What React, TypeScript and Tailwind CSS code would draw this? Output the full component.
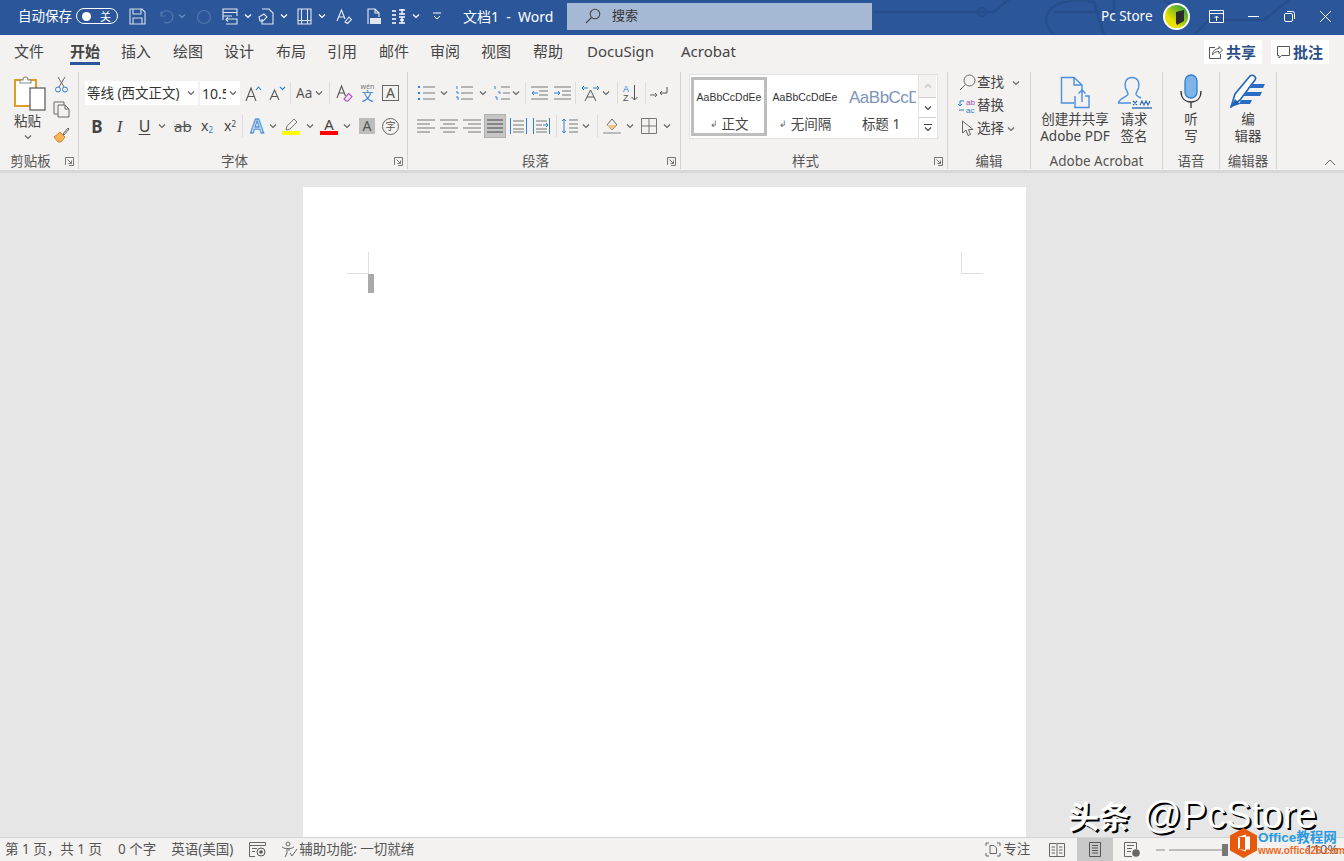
import React from 'react';

const G = '#6b6b6b';
const B = '#2f7fd1';

type P = { className?: string };

// small chevron used all over the ribbon
const Chev = ({ className = '', color = '#666' }: P & { color?: string }) => (
  <svg width="8" height="6" viewBox="0 0 8 6" className={`shrink-0 ${className}`} fill="none" stroke={color} strokeWidth="1.2">
    <path d="M1 1.5l3 3 3-3" />
  </svg>
);

const Sep = ({ className = '' }: P) => <div className={`w-px h-[22px] bg-[#dcdcdc] shrink-0 ${className}`} />;

const Ico = ({ w, h, className = '', children }: P & { w: number; h: number; children: React.ReactNode }) => (
  <svg width={w} height={h} viewBox={`0 0 ${w} ${h}`} fill="none" className={`shrink-0 ${className}`}>
    {children}
  </svg>
);

const Launcher = () => (
  <svg width="9" height="9" viewBox="0 0 9 9" fill="none" stroke="#777" strokeWidth="1" className="shrink-0 mr-[4px]">
    <path d="M.5 8V.5H8.5V8.5H4" />
    <path d="M2.5 2.5L6.5 6.5M6.5 3.5V6.5H3.5" />
  </svg>
);

const Group = ({ w, label, launcher, children }: { w: string; label: string; launcher?: boolean; children: React.ReactNode }) => (
  <div className={`${w} h-full shrink-0 flex flex-col border-r border-[#d2d2d2]`}>
    <div className="flex-1 min-h-0">{children}</div>
    <div className="h-[16px] flex items-center text-[13.5px] text-[#555] whitespace-nowrap">
      <span className={launcher ? 'flex-1 text-center pr-[4px]' : 'flex-1 text-center'}>{label}</span>
      {launcher && <Launcher />}
    </div>
  </div>
);

/* ---- title bar icons ---- */
const W = '#ffffff';
const SaveIcon = ({ className }: P) => (
  <Ico w={17} h={17} className={className}>
    <path d="M1 1H13L16 4V16H1Z M4 1V6H12V1 M4 16V10H13V16" stroke={W} strokeOpacity=".8" strokeWidth="1.1" />
  </Ico>
);
const UndoIcon = ({ className }: P) => (
  <Ico w={17} h={17} className={className}>
    <path d="M3 8a6 6 0 1 1 3 6M3 3v5h5" stroke="#6f8fc0" strokeOpacity=".55" strokeWidth="1.2" />
  </Ico>
);
const RedoIcon = ({ className }: P) => (
  <Ico w={16} h={17} className={className}>
    <circle cx="8" cy="9" r="6.5" stroke="#6f8fc0" strokeOpacity=".55" strokeWidth="1.2" />
  </Ico>
);
const QatForm = ({ className }: P) => (
  <Ico w={17} h={17} className={className}>
    <path d="M2 12V1H16V8M2 4.500H16M2 8H11" stroke={W} strokeOpacity=".85" strokeWidth="1.1" />
    <path d="M5 11H16V16H5M7 9.500L5 11.500L7 13.500" stroke={W} strokeOpacity=".85" strokeWidth="1.1" />
  </Ico>
);
const QatDoc = ({ className }: P) => (
  <Ico w={16} h={17} className={className}>
    <path d="M4 1H11L15 5V16H4V11" stroke={W} strokeOpacity=".85" strokeWidth="1.1" />
    <path d="M1 9L6 6L9 9L5 13H2Z" stroke={W} strokeOpacity=".85" strokeWidth="1.1" />
  </Ico>
);
const QatTable = ({ className }: P) => (
  <Ico w={15} h={17} className={className}>
    <path d="M1 1H14V16H1ZM4.500 1V16M10.500 1V16M1 12.500H14" stroke={W} strokeOpacity=".85" strokeWidth="1.1" />
  </Ico>
);
const QatFormat = ({ className }: P) => (
  <Ico w={16} h={17} className={className}>
    <path d="M1 13L5.500 2L9 11M3 9H8" stroke={W} strokeOpacity=".9" strokeWidth="1.1" />
    <path d="M9 14L13 9L15.500 11.500L11.500 15.500Z" stroke={W} strokeOpacity=".9" strokeWidth="1.1" />
  </Ico>
);
const QatPdf = ({ className }: P) => (
  <Ico w={15} h={17} className={className}>
    <path d="M2 16V1H9L13 5V9M9 1V5H13" stroke={W} strokeOpacity=".9" strokeWidth="1.1" />
    <rect x="4" y="10" width="11" height="6" fill={W} fillOpacity=".85" />
  </Ico>
);
const QatSpacing = ({ className }: P) => (
  <Ico w={15} h={17} className={className}>
    <path d="M1 3H5M1 7H5M1 11H5M1 15H5" stroke={W} strokeWidth="1.4" />
    <path d="M8 2H14M11 1V6M8 6H14M8 9H14M9 12H13M8 15H14M11 9V15" stroke={W} strokeWidth="1.4" />
  </Ico>
);

/* ---- font group ---- */
const GrowA = ({ className, down }: P & { down?: boolean }) => (
  <Ico w={17} h={17} className={className}>
    <path d={down ? 'M1 15L5.500 5L10 15M3 11.500H8' : 'M1 16L6 3L11 16M3 11.500H9'} stroke="#555" strokeWidth="1.1" />
    <path d={down ? 'M11 2L13.500 4.500L16 2' : 'M11 5L13.500 2L16 5'} stroke={B} strokeWidth="1.1" />
  </Ico>
);
const ClearFmt = ({ className }: P) => (
  <Ico w={17} h={18} className={className}>
    <path d="M1 14L5.500 2L9.500 12M3 9H8" stroke="#555" strokeWidth="1.1" />
    <path d="M8 15L12.500 9.500L16 12.500L12 17H10Z" fill="#f3e3f5" stroke="#a24bb5" strokeWidth="1.1" />
  </Ico>
);
const Mono = ({ t, className = '', w = 'w-[12px]' }: P & { t: string; w?: string }) => (
  <span className={`${w} shrink-0 text-center text-[#444] leading-none ${className}`}>{t}</span>
);

/* ---- paragraph group ---- */
const lines = (x1: number, x2: number, ys: number[]) => ys.map((y) => `M${x1} ${y}H${x2}`).join('');
const ListIcon = ({ className, kind }: P & { kind: 'dot' | 'num' | 'multi' }) => (
  <Ico w={18} h={16} className={className}>
    {kind === 'dot' && (
      <path d="M1 2h2M1 8h2M1 14h2" stroke={B} strokeWidth="2" />
    )}
    {kind === 'num' && <path d="M2 1v3M1 7h2v2M1 12h2v3" stroke={B} strokeWidth="1" />}
    {kind === 'multi' && <path d="M2 1v3M5 7h2v2M2 12h2v3" stroke={B} strokeWidth="1" />}
    <path d={kind === 'multi' ? 'M8 2H17M10 8H17M8 14H17' : lines(6, 18, [2, 8, 14])} stroke="#777" strokeWidth="1.1" />
  </Ico>
);
const IndentIcon = ({ className, more }: P & { more?: boolean }) => (
  <Ico w={17} h={14} className={className}>
    <path d={lines(0, 17, [1, 13])} stroke="#777" />
    <path d={lines(8, 17, [5, 9])} stroke="#777" />
    <path d={more ? 'M0 7H6M4 5L6 7L4 9' : 'M1 7H7M3 5L1 7L3 9'} stroke={B} />
  </Ico>
);
const AlignIcon = ({ className, kind }: P & { kind: 'l' | 'c' | 'r' | 'j' }) => {
  const d = {
    l: 'M0 1H18M0 5H13M0 9H18M0 13H13',
    c: 'M0 1H18M3 5H15M0 9H18M3 13H15',
    r: 'M0 1H18M5 5H18M0 9H18M5 13H18',
    j: 'M0 1H18M0 5H18M0 9H18M0 13H18',
  }[kind];
  return (
    <Ico w={18} h={14} className={className}>
      <path d={d} stroke={kind === 'j' ? '#555' : '#777'} />
    </Ico>
  );
};
const DistIcon = ({ className, thai }: P & { thai?: boolean }) => (
  <Ico w={17} h={16} className={className}>
    <path d="M.5 0V16M16.500 0V16" stroke={B} />
    <path d={thai ? 'M3 3H14M3 7H9M3 11H14M3 14H14' : 'M3 3H14M3 7H14M3 11H14M3 14H14'} stroke="#777" />
    <path d={thai ? 'M10 7H15M13 5L15 7L13 9' : ''} stroke={B} />
  </Ico>
);

const Pal = ({ className }: P) => (
  <Ico w={32} h={36} className={className}>
    <rect x="1" y="5" width="21" height="26" fill="#fff" stroke="#e39a2d" strokeWidth="2" />
    <path d="M6 8V5H9C9 1 14 1 14 5H17V8Z" fill="#fff" stroke="#8a8a8a" strokeWidth="1.1" />
    <rect x="16" y="13" width="15" height="22" fill="#fff" stroke="#555" strokeWidth="1.2" />
  </Ico>
);

const StyleCell = ({ sample, label, arrow, selected, title }: { sample: string; label: string; arrow?: boolean; selected?: boolean; title?: boolean }) => (
  <div className={`w-[76px] h-[59px] shrink-0 flex flex-col items-center overflow-hidden ${selected ? 'border-[3px] border-[#bdbdbd]' : 'border-[3px] border-transparent'}`}>
    <div className={`h-[35px] flex items-center whitespace-nowrap font-["Liberation_Sans",sans-serif] ${title ? 'w-full justify-start pl-[3px] text-[17px] tracking-[-0.5px] text-[#7d93b8] overflow-hidden' : 'text-[10.5px] text-[#333]'}`}>
      {sample}
    </div>
    <div className="flex items-center gap-[4px] text-[13.5px] text-[#444] leading-[18px] whitespace-nowrap">
      {arrow && <span className="text-[9px] text-[#666]">↲</span>}
      {label}
    </div>
  </div>
);

const EditRow = ({ icon, label, chev }: { icon: React.ReactNode; label: string; chev: string }) => (
  <div className="h-[23px] flex items-center pl-[10px]">
    <span className="w-[18px] shrink-0 flex justify-center">{icon}</span>
    <span className="ml-[1px] w-[28px] text-[13.5px] text-[#444] whitespace-nowrap">{label}</span>
    <Chev className={chev} />
  </div>
);

const tabs = [
  { t: '文件', c: 'ml-[14px] w-[30px]' },
  { t: '开始', c: 'ml-[26px] w-[30px] font-bold text-[#222] border-b-[3px] border-[#2b579a]' },
  { t: '插入', c: 'ml-[21px] w-[30px]' },
  { t: '绘图', c: 'ml-[22px] w-[30px]' },
  { t: '设计', c: 'ml-[21px] w-[30px]' },
  { t: '布局', c: 'ml-[22px] w-[30px]' },
  { t: '引用', c: 'ml-[21px] w-[30px]' },
  { t: '邮件', c: 'ml-[22px] w-[30px]' },
  { t: '审阅', c: 'ml-[21px] w-[30px]' },
  { t: '视图', c: 'ml-[21px] w-[31px]' },
  { t: '帮助', c: 'ml-[21px] w-[30px]' },
  { t: 'DocuSign', c: 'ml-[24px] w-[69px]' },
  { t: 'Acrobat', c: 'ml-[25px] w-[56px]' },
];

export default function App() {
  return (
    <div className='relative w-[1344px] h-[861px] overflow-hidden flex flex-col bg-[#e6e6e6] font-["Noto_Sans","Noto_Sans_CJK_SC",sans-serif]'>
      {/* Title bar */}
      <div className="relative h-[35px] shrink-0 bg-[#2b579a] flex items-center pl-[18px] pr-[13px] pb-[3px] text-white">
        <svg className="absolute right-0 top-0" width="470" height="35" viewBox="0 0 470 35" fill="none" stroke="#264e8c" strokeWidth="2.500">
          <path d="M0 12H120L140 -5M180 35C160 15 180 -5 220 2L230 35M240 0V12H180M320 35L335 20H390L415 0M290 0L310 15" />
          <circle cx="108" cy="12" r="4" />
        </svg>
        <span className="w-[54px] text-[13.5px] whitespace-nowrap">自动保存</span>
        <div className="ml-[4px] w-[42px] h-[16px] shrink-0 rounded-full border border-white flex items-center pl-[5px] justify-between pr-[6px]">
          <span className="w-[9px] h-[9px] rounded-full bg-white" />
          <span className="text-[11px] leading-none">关</span>
        </div>
        <SaveIcon className="ml-[11px]" />
        <UndoIcon className="ml-[12px]" />
        <Chev className="ml-[3px]" color="#6f8fc0" />
        <RedoIcon className="ml-[10px]" />
        <QatForm className="ml-[9px]" />
        <Chev className="ml-[6px]" color="#fff" />
        <QatDoc className="ml-[6px]" />
        <Chev className="ml-[6px]" color="#fff" />
        <QatTable className="ml-[9px]" />
        <Chev className="ml-[6px]" color="#fff" />
        <QatFormat className="ml-[10px]" />
        <QatPdf className="ml-[14px]" />
        <QatSpacing className="ml-[10px]" />
        <Chev className="ml-[6px]" color="#fff" />
        <svg width="8" height="8" viewBox="0 0 8 8" fill="none" stroke="#fff" className="ml-[13px] shrink-0">
          <path d="M0 1H8M1 4L4 7L7 4" />
        </svg>
        <span className="ml-[22px] w-[90px] text-[14px] whitespace-nowrap">文档1&nbsp; -&nbsp; Word</span>
        <div className="relative ml-[14px] w-[305px] h-[27px] shrink-0 bg-[#a6b9d4] flex items-center pl-[18px] text-[#333]">
          <svg width="16" height="16" viewBox="0 0 16 16" fill="none" stroke="#444" strokeWidth="1.100">
            <circle cx="10" cy="6" r="4.800" />
            <path d="M6.500 9.500L1 15" />
          </svg>
          <span className="ml-[11px] text-[13px]">搜索</span>
        </div>
        <span className="relative ml-auto w-[51px] text-[13.5px] whitespace-nowrap">Pc Store</span>
        <svg width="27" height="27" viewBox="0 0 27 27" className="relative ml-[11px] shrink-0">
          <defs>
            <linearGradient id="av" x1="0" y1="1" x2="1" y2="0">
              <stop offset="0.3" stopColor="#e8e000" />
              <stop offset="0.85" stopColor="#3aa53a" />
            </linearGradient>
          </defs>
          <circle cx="13.500" cy="13.500" r="13.500" fill="#fff" />
          <circle cx="13.500" cy="13.500" r="11.500" fill="url(#av)" />
          <path d="M13 9L21 7V18L14 22L13 20Z" fill="#2b2b2b" />
        </svg>
        <svg width="15" height="13" viewBox="0 0 15 13" fill="none" stroke="#fff" className="relative ml-[19px] shrink-0">
          <path d="M.5 .5H14.500V12.500H.5ZM.5 3.500H14.500M7.500 11V6M5.500 8L7.500 6L9.500 8" />
        </svg>
        <div className="relative ml-[24px] w-[11px] h-px bg-white shrink-0" />
        <svg width="11" height="11" viewBox="0 0 11 11" fill="none" stroke="#fff" className="relative ml-[25px] shrink-0">
          <rect x=".5" y="2.500" width="8" height="8" rx="1.500" />
          <path d="M3 .5H8.500A2 2 0 0 1 10.500 2.500V8" />
        </svg>
        <svg width="11" height="11" viewBox="0 0 11 11" stroke="#fff" className="relative ml-[25px] shrink-0">
          <path d="M0 0L11 11M11 0L0 11" />
        </svg>
      </div>

      {/* Tabs */}
      <div className="h-[31px] shrink-0 bg-[#f3f2f1] flex items-stretch pr-[15px]">
        {tabs.map((tab) => (
          <div key={tab.t} className={`${tab.c} shrink-0 pt-[5px] h-[30px] text-[15px] leading-[22px] text-[#444] whitespace-nowrap`}>
            {tab.t}
          </div>
        ))}
        <div className="ml-auto mt-[5px] w-[58px] h-[24px] bg-white flex items-center pl-[5px] gap-[3px] text-[15px] font-bold text-[#2b4f86]">
          <svg width="14" height="13" viewBox="0 0 14 13" fill="none" stroke="#555">
            <path d="M10 .5L13.500 4L10 7.500V5.500C6 5.500 4.500 7 3.500 9C3.500 5 6 2.800 10 2.500ZM6 1.500H.5V12.500H11.500V8" />
          </svg>
          共享
        </div>
        <div className="ml-[9px] mt-[5px] w-[58px] h-[24px] bg-white flex items-center pl-[6px] gap-[3px] text-[15px] font-bold text-[#2b4f86]">
          <svg width="13" height="13" viewBox="0 0 13 13" fill="none" stroke="#555">
            <path d="M.5 .5H12.500V9.500H4.500L2 12V9.500H.5Z" />
          </svg>
          批注
        </div>
      </div>

      {/* Ribbon */}
      <div className="h-[104px] shrink-0 bg-[#f3f2f1] pt-[6px] pb-[1px] flex">
        {/* Clipboard */}
        <Group w="w-[79px]" label="剪贴板" launcher>
          <div className="flex pl-[14px]">
            <div className="w-[30px] flex flex-col items-start">
              <Pal className="mt-[3px]" />
              <span className="mt-[1px] text-[13.5px] leading-[18px] text-[#444] whitespace-nowrap">粘贴</span>
              <Chev className="ml-[10px] mt-[4px]" />
            </div>
            <div className="ml-[9px] flex flex-col items-center mt-[4px]">
              <Ico w={13} h={17}>
                <path d="M3 1L9 11M10 1L4 11" stroke="#666" />
                <circle cx="3" cy="13.500" r="2.500" stroke={B} />
                <circle cx="10" cy="13.500" r="2.500" stroke={B} />
              </Ico>
              <Ico w={17} h={17} className="mt-[8px]">
                <path d="M11 4V1H1V13H5M5 4H12L16 8V16H5Z M12 4V8H16" stroke="#666" />
              </Ico>
              <Ico w={17} h={17} className="mt-[8px]">
                <path d="M10 8L15 2L16 3L11 9Z" stroke="#666" />
                <path d="M7 6L12 11L8 16H5L1 11Z" fill="#f5b45a" stroke="#d9822b" />
              </Ico>
            </div>
          </div>
        </Group>

        {/* Font */}
        <Group w="w-[329px]" label="字体" launcher>
          <div className="mt-[9px] h-[24px] flex items-center pl-[6px]">
            <div className="w-[113px] h-[24px] shrink-0 bg-white flex items-center pl-[2px] text-[13.5px] text-[#333] whitespace-nowrap overflow-hidden">
              <span className="flex-1">等线 (西文正文)</span>
              <Chev className="mr-[3px]" />
            </div>
            <div className="ml-[2px] w-[40px] h-[24px] shrink-0 bg-white flex items-center pl-[2px] text-[14px] text-[#333] overflow-hidden">
              <span className="w-[24px] overflow-hidden whitespace-nowrap">10.5</span>
              <Chev className="ml-[3px]" />
            </div>
            <GrowA className="ml-[5px]" />
            <GrowA className="ml-[7px]" down />
            <Sep className="ml-[4px]" />
            <span className="ml-[5px] w-[17px] shrink-0 text-[13.5px] text-[#555] whitespace-nowrap">Aa</span>
            <Chev className="ml-[2px]" />
            <Sep className="ml-[6px]" />
            <ClearFmt className="ml-[6px]" />
            <div className="ml-[7px] w-[15px] shrink-0 flex flex-col items-center text-[#2f7fd1]">
              <span className="text-[7px] leading-[8px] text-[#777]">wén</span>
              <span className="text-[12px] leading-[12px]">文</span>
            </div>
            <div className="ml-[7px] w-[17px] h-[16px] shrink-0 border border-[#666] flex items-center justify-center text-[14px] text-[#555] leading-none">A</div>
          </div>
          <div className="mt-[9px] h-[24px] flex items-center pl-[12px]">
            <Mono t="B" className="font-bold text-[17px]" />
            <Mono t="I" className="ml-[12px] italic text-[17px] font-['Liberation_Serif',serif]" w="w-[9px]" />
            <span className="ml-[14px] w-[13px] shrink-0 text-center text-[16px] text-[#444] leading-[16px] underline underline-offset-2">U</span>
            <Chev className="ml-[7px]" />
            <span className="ml-[8px] w-[17px] shrink-0 text-center text-[15px] text-[#555] line-through leading-none">ab</span>
            <span className="ml-[10px] w-[13px] shrink-0 text-[14px] text-[#444] leading-none">x<sub className="text-[8px] text-[#2f7fd1]">2</sub></span>
            <span className="ml-[10px] w-[13px] shrink-0 text-[14px] text-[#444] leading-none">x<sup className="text-[8px] text-[#444]">2</sup></span>
            <Sep className="ml-[5px]" />
            <Ico w={16} h={18} className="ml-[6px]">
              <text x="8" y="16" textAnchor="middle" fontSize="20" fontWeight="700" fontFamily="Liberation Sans" fill="#bcd9f3" stroke="#2f7fd1" strokeWidth="0.8">A</text>
            </Ico>
            <Chev className="ml-[4px]" />
            <div className="ml-[5px] w-[18px] shrink-0 flex flex-col items-center">
              <Ico w={14} h={13}>
                <path d="M2 12L3 8L10 1L13 4L6 11Z" stroke="#777" />
              </Ico>
              <div className="w-[18px] h-[4px] bg-[#ffff00]" />
            </div>
            <Chev className="ml-[6px]" />
            <div className="ml-[6px] w-[18px] shrink-0 flex flex-col items-center leading-none">
              <span className="text-[15px] text-[#444] leading-[13px]">A</span>
              <div className="w-[18px] h-[4px] bg-[#ff0000]" />
            </div>
            <Chev className="ml-[5px]" />
            <div className="ml-[8px] w-[16px] h-[16px] shrink-0 bg-[#bdbdbd] flex items-center justify-center text-[14px] text-[#555] leading-none">A</div>
            <div className="ml-[7px] w-[17px] h-[17px] shrink-0 rounded-full border border-[#666] flex items-center justify-center text-[10px] text-[#555] leading-none">字</div>
          </div>
        </Group>

        {/* Paragraph */}
        <Group w="w-[273px]" label="段落" launcher>
          <div className="mt-[9px] h-[24px] flex items-center pl-[9px]">
            <ListIcon kind="dot" />
            <Chev className="ml-[5px]" />
            <ListIcon kind="num" className="ml-[7px]" />
            <Chev className="ml-[6px]" />
            <ListIcon kind="multi" className="ml-[6px]" />
            <Chev className="ml-[1px]" />
            <Sep className="ml-[5px]" />
            <IndentIcon className="ml-[5px]" />
            <IndentIcon more className="ml-[6px]" />
            <Sep className="ml-[4px]" />
            <Ico w={17} h={17} className="ml-[6px]">
              <path d="M3 16L8.500 5L14 16M5 12H12" stroke="#555" />
              <path d="M0 3H6M2 1L0 3L2 5M11 3H17M15 1L17 3L15 5" stroke={B} />
            </Ico>
            <Chev className="ml-[3px]" />
            <Sep className="ml-[7px]" />
            <Ico w={16} h={18} className="ml-[5px]">
              <text x="0" y="8" fontSize="9" fill="#2f7fd1" fontFamily="Liberation Sans">A</text>
              <text x="0" y="17" fontSize="9" fill="#555" fontFamily="Liberation Sans">Z</text>
              <path d="M11.500 1V16M8.500 13L11.500 16L14.500 13" stroke="#555" />
            </Ico>
            <Sep className="ml-[6px]" />
            <Ico w={18} h={14} className="ml-[4px]">
              <path d="M0 9H7M5 7L7 9L5 11" stroke="#666" />
              <path d="M17 1V7H10M12 5L10 7L12 9" stroke="#555" />
            </Ico>
          </div>
          <div className="mt-[9px] h-[24px] flex items-center pl-[9px]">
            <AlignIcon kind="l" />
            <AlignIcon kind="c" className="ml-[5px]" />
            <AlignIcon kind="r" className="ml-[5px]" />
            <div className="ml-[3px] w-[22px] h-[24px] shrink-0 bg-[#c6c6c6] border border-[#b0b0b0] flex items-center justify-center">
              <Ico w={16} h={14}>
                <path d="M0 1H16M0 5H16M0 9H16M0 13H16" stroke="#444" strokeWidth="1.2" />
              </Ico>
            </div>
            <DistIcon className="ml-[4px]" />
            <DistIcon thai className="ml-[6px]" />
            <Sep className="ml-[6px]" />
            <Ico w={17} h={16} className="ml-[4px]">
              <path d="M3 1V15M1 3L3 1L5 3M1 13L3 15L5 13" stroke={B} />
              <path d={lines(8, 17, [2, 6, 10, 14])} stroke="#777" />
            </Ico>
            <Chev className="ml-[4px]" />
            <Sep className="ml-[7px]" />
            <Ico w={18} h={18} className="ml-[5px]">
              <path d="M4 8L9 2L14 8L9 13Z" stroke="#666" />
              <path d="M3 8H14L9 13Z" fill="#f1c48a" />
              <path d="M0 16H18" stroke="#bbb" strokeWidth="2" />
            </Ico>
            <Chev className="ml-[5px]" />
            <Ico w={16} h={16} className="ml-[7px]">
              <path d="M.5 .5H15.500V15.500H.5ZM8 .5V15.500M.5 8H15.500" stroke="#777" />
            </Ico>
            <Chev className="ml-[6px]" />
          </div>
        </Group>

        {/* Styles */}
        <Group w="w-[267px]" label="样式" launcher>
          <div className="ml-[8px] mt-[2px] w-[249px] h-[65px] flex bg-white border border-[#e2e2e2] pl-[1px] pt-[2px]">
            <StyleCell sample="AaBbCcDdEe" label="正文" arrow selected />
            <StyleCell sample="AaBbCcDdEe" label="无间隔" arrow />
            <StyleCell sample="AaBbCcD" label="标题 1" title />
            <div className="ml-[-1px] -mt-[2px] w-[18px] shrink-0 flex flex-col bg-[#f3f2f1] border-l border-[#e2e2e2]">
              <div className="h-[22px] flex items-center justify-center">
                <Chev className="rotate-180" color="#c4c4c4" />
              </div>
              <div className="h-[21px] bg-white border-y border-[#d0d0d0] flex items-center justify-center">
                <Chev color="#444" />
              </div>
              <div className="flex-1 bg-white flex flex-col items-center justify-center gap-[1px]">
                <div className="w-[8px] h-px bg-[#444]" />
                <Chev color="#444" />
              </div>
            </div>
          </div>
        </Group>

        {/* Editing */}
        <Group w="w-[83px]" label="编辑">
          <div className="mt-[-1px] pt-[0px]">
            <EditRow
              chev="ml-[7px]"
              label="查找"
              icon={
                <Ico w={17} h={17}>
                  <circle cx="10.500" cy="6.500" r="5.500" stroke="#666" />
                  <path d="M6.500 10.500L1 16" stroke="#666" />
                </Ico>
              }
            />
            <EditRow
              chev="hidden"
              label="替换"
              icon={
                <Ico w={18} h={16}>
                  <text x="8" y="7" fontSize="8" fill="#a24bb5" fontFamily="Liberation Sans">ab</text>
                  <text x="8" y="15" fontSize="8" fill="#2f7fd1" fontFamily="Liberation Sans">ac</text>
                  <path d="M6 3H2V8M0 6L2 8L4 6M1 12H6" stroke="#2f7fd1" />
                </Ico>
              }
            />
            <EditRow
              chev="ml-[2px]"
              label="选择"
              icon={
                <Ico w={13} h={17}>
                  <path d="M1.500 1V13L5 10L7 15.500L9.500 14.500L7.500 9.500H12Z" stroke="#666" />
                </Ico>
              }
            />
          </div>
        </Group>

        {/* Adobe Acrobat */}
        <Group w="w-[132px]" label="Adobe Acrobat">
          <div className="flex pl-[9px] text-[13.5px] leading-[17px] text-[#444] whitespace-nowrap text-center">
            <div className="w-[70px] flex flex-col items-center">
              <Ico w={30} h={33} className="mt-[4px]">
                <path d="M14 27H1.500V1.500H14L22 9V15M14 1.500V9H22" stroke="#4a90e2" strokeWidth="1.400" />
                <path d="M15 20V31.500H29V20H25M22 26V14M18.500 17.500L22 14L25.500 17.500" stroke="#4a90e2" strokeWidth="1.400" />
              </Ico>
              <span className="mt-[2px]">创建并共享</span>
              <span>Adobe PDF</span>
            </div>
            <div className="ml-[6px] w-[36px] flex flex-col items-center">
              <Ico w={35} h={33} className="mt-[4px]">
                <path d="M15 1.500C9 1.500 7 7 8.500 12C9.500 15 11 16 11 18C11 21 1.500 22 1.500 27H14M15 1.500C21 1.500 23 7 21.500 12C20.500 15 19 16 19 18C19 20 22 21 24 22" stroke="#4a90e2" strokeWidth="1.400" />
                <path d="M16 25L20 29M20 25L16 29M23 29L25 25L27 29L29 25L31 29L33 25" stroke="#2b6cb8" strokeWidth="1.200" />
                <path d="M15 32H35" stroke="#2b6cb8" strokeWidth="1.400" />
              </Ico>
              <span className="mt-[2px]">请求</span>
              <span>签名</span>
            </div>
          </div>
        </Group>

        {/* Voice */}
        <Group w="w-[57px]" label="语音">
          <div className="flex flex-col items-center text-[13.5px] leading-[17px] text-[#444]">
            <Ico w={22} h={35} className="mt-[2px]">
              <rect x="5" y="1" width="12" height="23" rx="6" fill="#7fb4e8" stroke="#2f7fd1" strokeWidth="1.300" />
              <path d="M1 17C1 24 5 28 11 28C17 28 21 24 21 17M11 28V34" stroke="#333" strokeWidth="1.300" />
            </Ico>
            <span className="mt-[2px]">听</span>
            <span>写</span>
          </div>
        </Group>

        {/* Editor */}
        <Group w="w-[57px]" label="编辑器">
          <div className="flex flex-col items-center text-[13.5px] leading-[17px] text-[#444]">
            <Ico w={36} h={34} className="mt-[2px]">
              <path d="M1 33L5 20L20 2C23 0 27 3 25 6L10 26Z" fill="#fff" stroke="#1d62b8" strokeWidth="1.600" />
              <path d="M1 33L10 30L5 25Z" fill="#1d62b8" />
              <path d="M21 10H35L33 14H18ZM16 18H32L30 22H13ZM11 26H22L20 30H9Z" fill="#2b6cc4" />
            </Ico>
            <span className="mt-[3px]">编</span>
            <span>辑器</span>
          </div>
        </Group>

        <div className="flex-1 flex items-end justify-end pr-[8px] pb-[3px]">
          <Ico w={12} h={7}>
            <path d="M1 6L6 1L11 6" stroke="#666" />
          </Ico>
        </div>
      </div>
      <div className="h-[3px] shrink-0 bg-[#d8d8d8]" />

      {/* Document */}
      <div className="flex-1 min-h-0 pl-[303px] pt-[14px] overflow-hidden">
        <div className="w-[723px] h-full bg-white pt-[65px] pl-[44px] pr-[43px]">
          <div className="flex justify-between">
            <div className="w-[22px] h-[22px] border-r border-b border-[#dedede]" />
            <div className="w-[22px] h-[22px] border-l border-b border-[#dedede]" />
          </div>
          <div className="ml-[21px] w-[6px] h-[19px] bg-[#a9a9a9]" />
        </div>
      </div>

      {/* Status bar */}
      <div className="h-[24px] shrink-0 bg-[#f3f2f1] border-t border-[#d4d4d4] flex items-center pl-[5px] pr-[6px] text-[13.5px] text-[#555] whitespace-nowrap">
        <span className="w-[97px]">第 1 页，共 1 页</span>
        <span className="ml-[16px] w-[39px]">0 个字</span>
        <span className="ml-[15px] w-[62px]">英语(美国)</span>
        <Ico w={17} h={15} className="ml-[16px]">
          <path d="M.5 .5H16.500V3.500H.5ZM.5 3.500V14.500H6M3 6.500H8M3 9.500H6" stroke="#666" />
          <circle cx="12" cy="10" r="4" stroke="#555" />
          <circle cx="12" cy="10" r="1.800" fill="#555" />
        </Ico>
        <Ico w={17} h={17} className="ml-[15px]">
          <circle cx="7" cy="3" r="2" stroke="#666" />
          <path d="M1 6C3 7.500 5 7.500 7 7.500C9 7.500 11 7.500 13 6M6 8V12L4 16M8 8V10" stroke="#666" />
          <path d="M9 12L11 15L16 8" stroke="#666" />
        </Ico>
        <span className="ml-[1px] w-[114px]">辅助功能: 一切就绪</span>
        <Ico w={16} h={15} className="ml-[572px]">
          <path d="M1 4V1H4M12 1H15V4M15 11V14H12M4 14H1V11" stroke="#666" />
          <path d="M5 3.500H9L11.500 6V11.500H5Z" stroke="#666" />
        </Ico>
        <span className="ml-[2px] w-[27px]">专注</span>
        <Ico w={16} h={14} className="ml-[19px]">
          <path d="M.5 .5H7.500L8 1.500L8.500 .5H15.500V13.500H.5ZM8 1.500V13.500M2.500 4H6M2.500 7H6M2.500 10H6M10 4H13.500M10 7H13.500M10 10H13.500" stroke="#666" />
        </Ico>
        <div className="ml-[12px] w-[36px] h-[23px] shrink-0 bg-[#c8c8c8] flex items-center justify-center">
          <Ico w={12} h={15}>
            <path d="M.5 .5H11.500V14.500H.5ZM3 3.500H9M3 6H9M3 8.500H9M3 11H9" stroke="#555" />
          </Ico>
        </div>
        <Ico w={16} h={15} className="ml-[11px]">
          <path d="M.5 .5H12.500V7M.5 .5V14.500H8M3 3.500H10M3 6.500H8M3 9.500H7" stroke="#666" />
          <circle cx="12" cy="11" r="3.800" fill="#666" />
        </Ico>
        <Ico w={72} h={16} className="ml-[16px]">
          <path d="M0 8H9M13 8H66" stroke="#888" />
          <rect x="66" y="2" width="6" height="12" fill="#777" />
        </Ico>
        <span className="ml-[77px] w-[33px] text-[13px]">110%</span>
      </div>

      {/* Watermark over the window */}
      <div className='absolute left-[1068px] top-[795px] flex items-baseline text-white [text-shadow:2px_2px_0_#000] whitespace-nowrap font-["Liberation_Sans","Noto_Sans_CJK_SC",sans-serif]'>
        <span className="text-[31px] leading-[40px] font-bold">头条</span>
        <span className="ml-[13px] text-[38px] leading-[40px]">@PcStore</span>
      </div>
      <div className="absolute left-[1230px] top-[828px] flex items-center">
        <svg width="27" height="30" viewBox="0 0 27 30">
          <path d="M13.500 0L27 7.500V22.500L13.500 30L0 22.500V7.500Z" fill="#e8590c" />
          <path d="M8 9L16 6.500V23.500L8 21L15 22V9Z" fill="#fff" />
          <path d="M8 9V21L10 20V10Z" fill="#fff" />
          <path d="M16 8.500H20V21.500H16Z" fill="#fff" />
        </svg>
        <div className='ml-[1px] flex flex-col font-["Liberation_Sans","Noto_Sans_CJK_SC",sans-serif] font-bold whitespace-nowrap'>
          <span className="text-[13.5px] leading-[15px] text-[#2b9ae0]">Office教程网</span>
          <span className="text-[10px] leading-[12px] text-[#ee6a1f]">www.office26.com</span>
        </div>
      </div>
    </div>
  );
}
